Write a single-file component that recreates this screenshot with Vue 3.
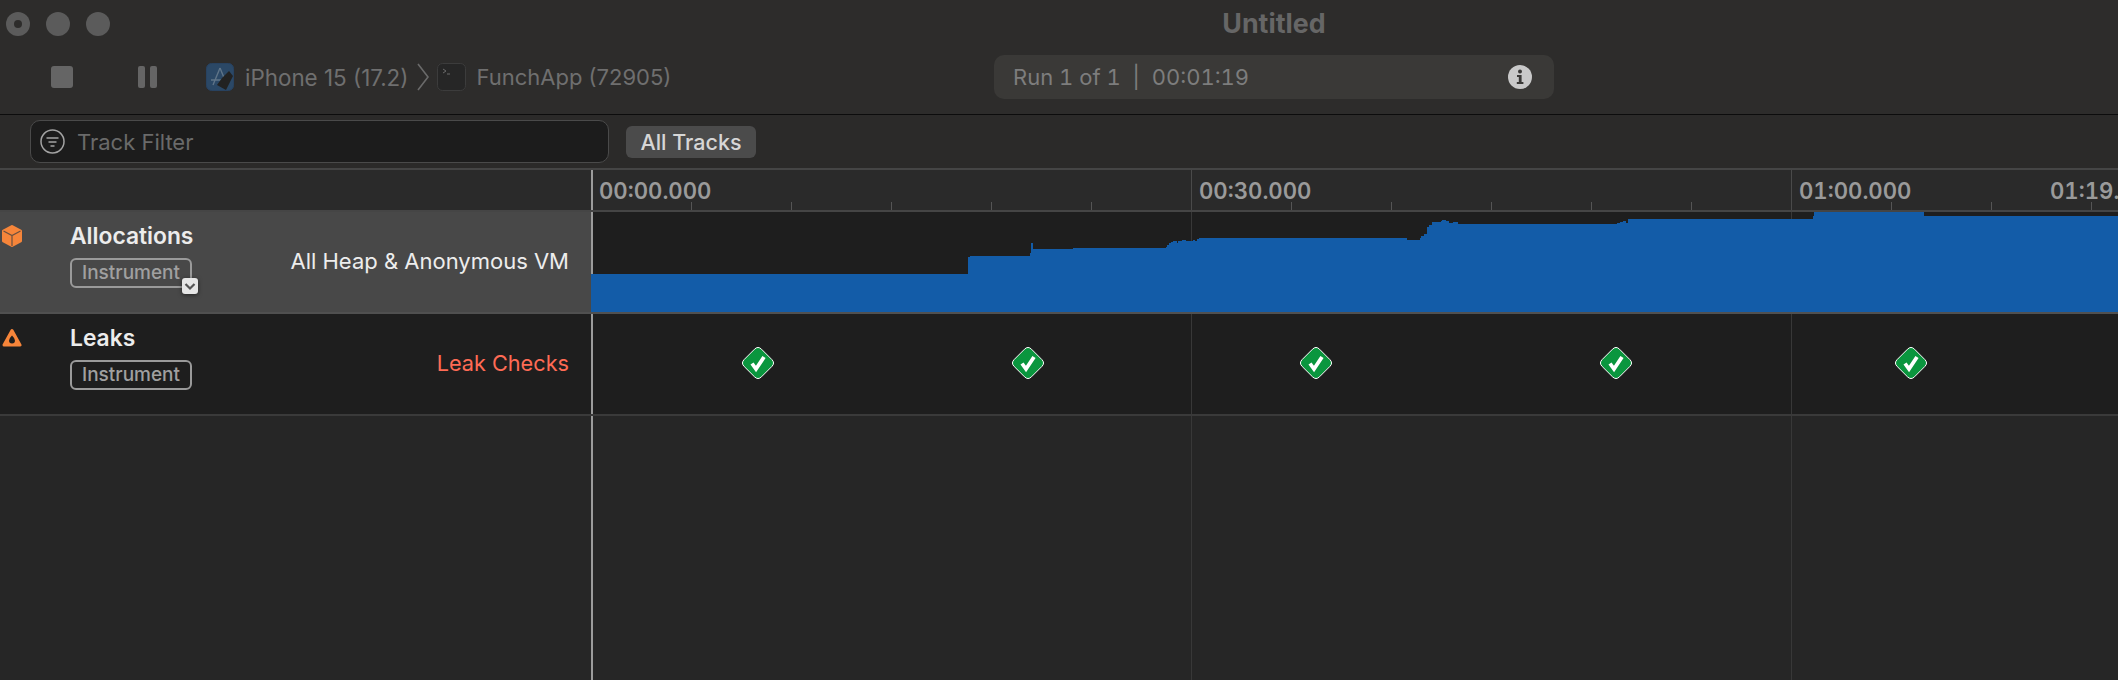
<template>
  <div class="window">
    <!-- title + toolbar -->
    <header class="titlebar">
      <div class="title-row">
        <div class="lights">
          <span class="light"><i></i></span>
          <span class="light"></span>
          <span class="light"></span>
        </div>
        <div class="title">Untitled</div>
      </div>
      <div class="tool-row">
        <div class="tools">
          <span class="stop"></span>
          <span class="pause"><i></i><i></i></span>
          <svg class="app-icon" width="28" height="28" viewBox="0 0 28 28">
            <rect x="0.5" y="0.5" width="27" height="27" rx="5" fill="#2b4866" stroke="#284260" />
            <path d="M14 5 L7 22 M14 5 L21 22 M5 17 H23" stroke="#5f7488" stroke-width="1.4" fill="none" />
            <path d="M23 8 L27 13 L20 27 L11 22 L16 15 Z" fill="#222" />
          </svg>
          <span class="device">iPhone 15 (17.2)</span>
          <svg class="crumb" width="12" height="28" viewBox="0 0 12 28">
            <path d="M1 1 L11 14 L1 27" stroke="#6a6a6a" stroke-width="1.6" fill="none" />
          </svg>
          <svg class="term-icon" width="29" height="28" viewBox="0 0 29 28">
            <rect x="0.5" y="0.5" width="28" height="27" rx="5" fill="#262626" stroke="#3c3c3c" />
            <path d="M6 6 L9 8 L6 10 M10 11 H13" stroke="#6a6a6a" stroke-width="1" fill="none" />
          </svg>
          <span class="device app">FunchApp (72905)</span>
        </div>
        <div class="run-pill">
          <span>Run 1 of 1&nbsp; |&nbsp; 00:01:19</span>
          <svg width="24" height="24" viewBox="0 0 24 24">
            <circle cx="12" cy="12" r="12" fill="#c9c9c9" />
            <circle cx="12" cy="6.6" r="2" fill="#3a3937" />
            <path d="M9 10 H13.6 V17 H15.4 V19 H8.8 V17 H10.8 V12 H9 Z" fill="#3a3937" />
          </svg>
        </div>
      </div>
    </header>

    <!-- filter -->
    <div class="filter-bar">
      <div class="filter-input">
        <svg width="25" height="25" viewBox="0 0 25 25">
          <circle cx="12.5" cy="12.5" r="11.5" fill="none" stroke="#a3a3a3" stroke-width="1.5" />
          <path d="M6.5 9 H18.5 M8.5 13 H16.5 M10.5 17 H14.5" stroke="#a3a3a3" stroke-width="1.7" />
        </svg>
        <span>Track Filter</span>
      </div>
      <button class="all-tracks">All Tracks</button>
    </div>

    <!-- ruler -->
    <div class="ruler">
      <div class="side"></div>
      <div class="ruler-scale">
        <span
          v-for="t in ticks"
          :key="t"
          class="tick"
          :class="{ major: t % 600 === 0 }"
          :style="{ left: t - 2 + 'px' }"
        ></span>
        <span
          v-for="l in labels"
          :key="l.text"
          class="time"
          :style="{ left: l.x + 'px' }"
        >{{ l.text }}</span>
      </div>
    </div>

    <!-- allocations -->
    <div class="row selected">
      <div class="side">
        <svg class="track-icon" width="20" height="22" viewBox="0 0 20 22">
          <path d="M10 1.5 L18.5 6 V16 L10 20.5 L1.5 16 V6 Z" fill="#f6853a" stroke="#f6853a" stroke-width="3" stroke-linejoin="round" />
          <path d="M1.5 6 L10 10.5 L18.5 6 M10 10.5 V21" stroke="#6a5040" stroke-width="1.2" fill="none" />
        </svg>
        <div class="track-names">
          <div class="track-name">Allocations</div>
          <span class="badge">Instrument</span>
        </div>
        <svg class="popup" width="16" height="16" viewBox="0 0 16 16">
          <rect width="16" height="16" rx="3" fill="#e6e6e6" />
          <path d="M3.5 6 L8 10.5 L12.5 6" stroke="#555" stroke-width="2.2" fill="none" />
        </svg>
        <div class="track-detail">All Heap &amp; Anonymous VM</div>
      </div>
      <div class="lane">
        <span class="grid-line" style="left: 598px"></span>
        <span class="grid-line" style="left: 1198px"></span>
        <svg class="chart" width="1527" height="100" viewBox="591 212 1527 100" preserveAspectRatio="none" shape-rendering="crispEdges">
          <path :d="chartPath" fill="#135ca8" />
        </svg>
      </div>
    </div>

    <!-- leaks -->
    <div class="row">
      <div class="side">
        <svg class="track-icon leak" width="20" height="19" viewBox="0 0 20 19">
          <path d="M10 2.5 L18 17 H2 Z" fill="#f6853a" stroke="#f6853a" stroke-width="3" stroke-linejoin="round" />
          <path d="M10 7.5 Q13 10.5 13 12.5 A3 3 0 0 1 7 12.5 Q7 10.5 10 7.5 Z" fill="#1e1e1e" />
        </svg>
        <div class="track-names">
          <div class="track-name">Leaks</div>
          <span class="badge">Instrument</span>
        </div>
        <div class="track-detail red">Leak Checks</div>
      </div>
      <div class="lane">
        <span class="grid-line" style="left: 598px"></span>
        <span class="grid-line" style="left: 1198px"></span>
        <svg
          v-for="m in markers"
          :key="m"
          class="marker"
          :style="{ left: m + 'px' }"
          width="34"
          height="34"
          viewBox="0 0 34 34"
        >
          <path d="M13.5 3.2 Q17 -0.3 20.5 3.2 L30.8 13.5 Q34.3 17 30.8 20.5 L20.5 30.8 Q17 34.3 13.5 30.8 L3.2 20.5 Q-0.3 17 3.2 13.5 Z" fill="#0a963e" stroke="#fff" stroke-width="1" />
          <path d="M11 17.5 L15 23 L23 11" fill="none" stroke="#fff" stroke-width="3.8" />
        </svg>
      </div>
    </div>

    <!-- empty -->
    <div class="empty">
      <div class="side"></div>
      <div class="lane">
        <span class="grid-line" style="left: 598px"></span>
        <span class="grid-line" style="left: 1198px"></span>
      </div>
    </div>
  </div>
</template>

<script setup>
// x positions are relative to the start of the timeline (x = 591 on screen)
const ticks = []
for (let t = 100; t < 1527; t += 100) ticks.push(t)

const labels = [
  { text: "00:00.000", x: 6 },
  { text: "00:30.000", x: 606 },
  { text: "01:00.000", x: 1206 },
  { text: "01:19.", x: 1457 }
]

const markers = [148, 418, 706, 1006, 1301]

// step outline of the memory graph: [from x, top]
const steps = [
  [591, 274], [968, 257], [970, 256], [1030, 253], [1031, 243], [1033, 249], [1073, 248],
  [1166, 247], [1167, 245], [1169, 243], [1171, 242], [1173, 241], [1177, 243], [1178, 241], [1182, 240],
  [1186, 241], [1193, 240], [1195, 241], [1197, 239], [1199, 238], [1407, 240], [1420, 238], [1421, 236],
  [1424, 234], [1427, 227], [1429, 225], [1432, 222], [1441, 221], [1442, 220], [1446, 221], [1449, 223],
  [1453, 222], [1458, 224], [1617, 223], [1620, 222], [1623, 221], [1626, 223], [1628, 219], [1813, 216],
  [1814, 212], [1924, 216]
]
const chartPath =
  "M591 312 " + steps.map(([x, y]) => `H${x} V${y}`).join(" ") + " H2118 V312 Z"
</script>

<style scoped>
.window {
  width: 2118px;
  height: 680px;
  overflow: hidden;
  display: flex;
  flex-direction: column;
  background: #262626;
  font-family: Inter, "Liberation Sans", sans-serif;
}

.titlebar {
  height: 115px;
  flex: none;
  box-sizing: border-box;
  background: #2d2c2b;
  border-bottom: 1px solid #0c0c0c;
}
.title-row,
.tool-row {
  display: grid;
  grid-template-columns: 994px 560px 1fr;
  align-items: center;
}
.title-row {
  height: 47px;
}
.tool-row {
  height: 44px;
  margin-top: 8px;
}
.lights {
  display: flex;
  gap: 16px;
  padding-left: 6px;
}
.light {
  width: 24px;
  height: 24px;
  border-radius: 50%;
  background: #5b5b5b;
  display: flex;
  align-items: center;
  justify-content: center;
}
.light i {
  width: 8px;
  height: 8px;
  border-radius: 50%;
  background: #2d2c2b;
}
.title {
  grid-column: 2;
  margin-top: -2px;
  text-align: center;
  font-size: 26.8px;
  font-weight: 700;
  color: #666;
}
.tools {
  display: flex;
  align-items: center;
  padding-left: 51px;
}
.stop {
  width: 22px;
  height: 22px;
  border-radius: 3px;
  background: #656565;
}
.pause {
  display: flex;
  gap: 5px;
  margin-left: 65px;
}
.pause i {
  width: 7px;
  height: 22px;
  border-radius: 2px;
  background: #656565;
}
.app-icon {
  margin-left: 49px;
}
.device {
  margin-left: 11px;
  font-size: 22.4px;
  color: #6f6f6f;
}
.crumb {
  margin-left: 9px;
}
.term-icon {
  margin-left: 8px;
}
.device.app {
  margin-left: 10px;
  font-size: 22px;
}
.run-pill {
  height: 44px;
  box-sizing: border-box;
  padding: 0 22px 0 19px;
  border-radius: 10px;
  background: #3a3937;
  display: flex;
  align-items: center;
  justify-content: space-between;
  font-size: 22px;
  font-variant-numeric: tabular-nums;
  color: #7d7d7d;
}

.filter-bar {
  height: 55px;
  flex: none;
  box-sizing: border-box;
  background: #2b2a29;
  display: flex;
  align-items: center;
  padding: 0 0 0 30px;
  border-bottom: 2px solid #454545;
}
.filter-input {
  width: 579px;
  height: 43px;
  box-sizing: border-box;
  border: 1px solid #4a4a4a;
  border-radius: 10px;
  background: #1c1c1c;
  display: flex;
  align-items: center;
  padding-left: 9px;
  gap: 12px;
  font-size: 22px;
  color: #6a6a6a;
}
.all-tracks {
  margin-left: 17px;
  width: 130px;
  height: 32px;
  border: 0;
  padding: 0;
  border-radius: 6px;
  background: #4b4b4b;
  color: #d6d6d6;
  font: 500 21.5px Inter, "Liberation Sans", sans-serif;
}

.ruler {
  height: 42px;
  flex: none;
  box-sizing: border-box;
  display: flex;
  background: #2a2a2a;
  border-bottom: 2px solid #454545;
}
.ruler-scale {
  flex: 1;
  position: relative;
  border-left: 2px solid #9c9c9c;
}
.tick {
  position: absolute;
  bottom: 0;
  width: 1px;
  height: 8px;
  background: #555;
}
.tick.major {
  height: 40px;
  background: #4a4a4a;
}
.time {
  position: absolute;
  top: 8px;
  font-size: 22.2px;
  font-weight: 600;
  font-variant-numeric: tabular-nums;
  line-height: 26px;
  color: #9a9a9a;
  white-space: nowrap;
}

.side {
  width: 591px;
  flex: none;
  box-sizing: border-box;
  position: relative;
  display: flex;
  align-items: flex-start;
}
.row {
  height: 102px;
  flex: none;
  box-sizing: border-box;
  display: flex;
  background: #1e1e1e;
  border-bottom: 2px solid #3a3a3a;
}
.row.selected {
  border-bottom-color: #505050;
}
.row.selected .side {
  background: #484848;
}
.track-icon {
  margin: 13px 0 0 2px;
}
.track-icon.leak {
  margin-top: 14px;
}
.track-names {
  position: absolute;
  left: 70px;
  top: 9px;
}
.track-name {
  font-size: 22.8px;
  font-weight: 600;
  line-height: 30px;
  color: #ececec;
}
.badge {
  display: block;
  width: 122px;
  height: 30px;
  margin-top: 7px;
  box-sizing: border-box;
  border: 2px solid #9a9a9a;
  border-radius: 6px;
  text-align: center;
  font-size: 19px;
  font-weight: 500;
  line-height: 26px;
  color: #a0a0a0;
}
.popup {
  position: absolute;
  left: 182px;
  top: 66px;
  filter: drop-shadow(0 1px 2px rgba(0, 0, 0, 0.5));
}
.track-detail {
  position: absolute;
  right: 22px;
  top: 35px;
  font-size: 22px;
  line-height: 28px;
  color: #ededed;
}
.track-detail.red {
  font-size: 21.7px;
  color: #ff6b55;
}
.lane {
  flex: 1;
  position: relative;
  border-left: 2px solid #9c9c9c;
  min-width: 0;
}
.chart {
  position: absolute;
  left: -2px;
  top: 0;
  display: block;
}
.grid-line {
  position: absolute;
  top: 0;
  bottom: 0;
  width: 1px;
  background: #383838;
}
.marker {
  position: absolute;
  top: 32px;
}
.empty {
  flex: 1;
  display: flex;
  background: #262626;
}
</style>
